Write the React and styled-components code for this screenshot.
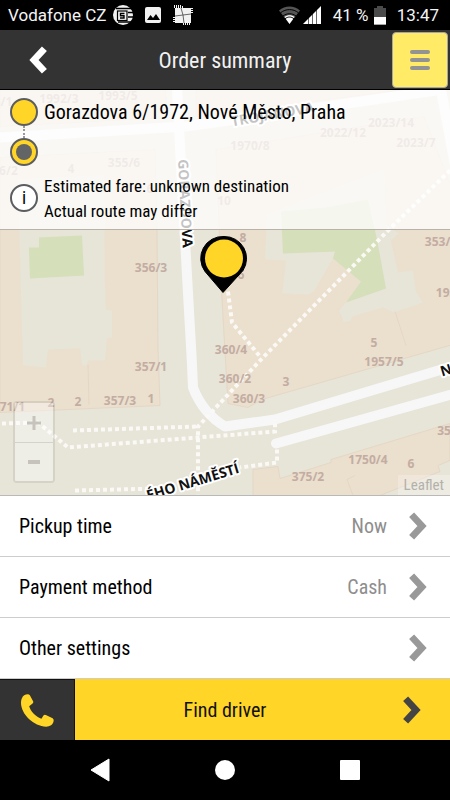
import React from "react"
import styled, { createGlobalStyle } from "styled-components"

const GlobalStyle = createGlobalStyle`
  * { box-sizing: border-box; }
  body {
    margin: 0;
    background: #000;
    font-family: "Roboto Condensed", "Liberation Sans Narrow", Roboto, sans-serif;
  }
  button {
    font-family: inherit;
    border: 0;
    margin: 0;
    padding: 0;
    cursor: pointer;
  }
`

const Screen = styled.div`
  display: flex;
  flex-direction: column;
  min-height: 100vh;
`

const StatusBar = styled.div`
  display: flex;
  align-items: center;
  justify-content: space-between;
  height: 30px;
  padding: 0 11px 0 8px;
  background: #000;
  color: #f4f4f4;
  font-family: Roboto, sans-serif;
  font-size: 17px;
  line-height: 30px;
  white-space: nowrap;
`

const StatusGroup = styled.div`
  display: flex;
  align-items: center;
  gap: ${p => p.$gap}px;
  font-weight: ${p => p.$weight || 400};
`

const Header = styled.header`
  display: grid;
  grid-template-columns: 76px 1fr 56px;
  align-items: center;
  height: 60px;
  padding-right: 2px;
  background: #333;
  border-bottom: 1px solid #000;
`

const Title = styled.h1`
  margin: 0;
  padding: 2px 18px 0 0;
  color: #f2f2f2;
  font-size: 22px;
  font-weight: 400;
  line-height: 28px;
  text-align: center;
`

const BackButton = styled.button`
  display: flex;
  align-items: center;
  justify-content: center;
  height: 56px;
  background: transparent;
  color: #fff;
`

const MenuButton = styled.button`
  display: flex;
  flex-direction: column;
  align-items: center;
  justify-content: center;
  gap: 4px;
  height: 56px;
  background: #ffeb66;
  border: 1px solid #a6a6a6;
  border-radius: 4px;
`

const MenuLine = styled.span`
  width: 20px;
  height: 4px;
  border-radius: 2px;
  background: #939393;
`

const MapArea = styled.main`
  position: relative;
  flex: 1 0 406px;
  overflow: hidden;
  background: #e7e4d8;
  border-bottom: 1px solid #b9b9b9;
`

const MapDrawing = styled.svg`
  position: absolute;
  inset: 0;
  width: 100%;
  height: 100%;
`

const RoutePanel = styled.section`
  position: relative;
  display: grid;
  grid-template-columns: 28px 1fr;
  column-gap: 6px;
  height: 140px;
  padding: 8px 10px 5px;
  background: rgba(255, 255, 255, 0.75);
  border-bottom: 1px solid #b8b2a8;
  color: #000;
`

const Stops = styled.div`
  display: flex;
  flex-direction: column;
  align-items: center;
`

const Stop = styled.span`
  display: flex;
  align-items: center;
  justify-content: center;
  width: 28px;
  height: 28px;
  flex: none;
  border: 2px solid #5b5d60;
  border-radius: 50%;
  background: ${p => p.$fill};
  font-size: 18px;
  line-height: 24px;
`

const StopCore = styled.span`
  width: 16px;
  height: 16px;
  border-radius: 50%;
  background: #636466;
`

const Dots = styled.span`
  height: 12px;
  border-left: 2px dotted #999;
`

const RouteText = styled.div`
  display: flex;
  flex-direction: column;
  justify-content: space-between;
`

const Address = styled.p`
  margin: 0;
  font-size: 20px;
  line-height: 28px;
`

const Fare = styled.p`
  margin: 0;
  font-size: 17px;
  line-height: 25px;
`

const InfoStop = styled(Stop)`
  margin-top: 18px;
`

const ZoomControl = styled.div`
  position: absolute;
  left: 13px;
  bottom: 12px;
  display: flex;
  flex-direction: column;
  border: 2px solid rgba(90, 90, 80, 0.13);
  border-radius: 4px;
`

const ZoomButton = styled.button`
  display: flex;
  align-items: center;
  justify-content: center;
  width: 38px;
  height: 39px;
  background: rgba(255, 255, 255, 0.36);
  color: #c6c3bc;

  & + & {
    border-top: 1px solid #d5d2c9;
  }
`

const Attribution = styled.a`
  position: absolute;
  right: 0;
  bottom: 0;
  padding: 0 6px;
  background: rgba(255, 255, 255, 0.25);
  color: #b3b1aa;
  font-size: 15px;
  line-height: 20px;
  text-decoration: none;
`

const Options = styled.div`
  display: flex;
  flex-direction: column;
  background: #fff;
`

const OptionRow = styled.button`
  display: flex;
  align-items: center;
  height: 61px;
  padding: 0 23px 0 19px;
  background: #fff;
  border-bottom: 1px solid #cdcdcd;
  color: #000;
  font-size: 20px;
  line-height: 24px;
  text-align: left;
`

const OptionValue = styled.span`
  margin-left: auto;
  margin-right: 22px;
  color: #8e8e8e;
`

const Actions = styled.footer`
  display: grid;
  grid-template-columns: 75px 1fr;
  height: 61px;
`

const CallButton = styled.button`
  display: flex;
  align-items: center;
  justify-content: center;
  background: #333;
  border-right: 1px solid #111;
  border-top: 1px solid #111;
`

const FindButton = styled.button`
  display: grid;
  grid-template-columns: 1fr 18px;
  align-items: center;
  padding: 0 29px 0 0;
  background: #ffd527;
  color: #111;
  font-size: 20px;
  line-height: 24px;
`

const FindLabel = styled.span`
  padding-right: 28px;
`

const SystemNav = styled.nav`
  display: flex;
  justify-content: center;
  gap: 65px;
  height: 60px;
  background: #000;
`

const SystemButton = styled.button`
  display: flex;
  align-items: center;
  justify-content: center;
  width: 60px;
  background: transparent;
`

const Chevron = ({ color, left }) => (
  <svg width="18" height="28" viewBox="0 0 18 28" aria-hidden="true">
    <path
      d={left ? "M15.4 2.8 L5 14 L15.4 25.2" : "M2.6 2.8 L13 14 L2.6 25.2"}
      fill="none"
      stroke={color}
      strokeWidth="6.8"
    />
  </svg>
)

const StatusIcons = () => (
  <svg width="82" height="22" viewBox="113 4 82 22" aria-hidden="true">
    <circle cx="124" cy="15" r="10" fill="#f2f2f2" />
    <path d="M117 8.500H134M129 12.500H136M129 17H136M119 22H132" stroke="#000" strokeWidth="1.4" />
    <rect x="118.500" y="11" width="9.500" height="9.500" fill="#f2f2f2" stroke="#000" strokeWidth="1.2" />
    <path d="M125.500 13.500H121.500V15.700H125V18H121" fill="none" stroke="#000" strokeWidth="1.4" />
    <rect x="146" y="7" width="16" height="16" rx="2" fill="#f2f2f2" />
    <path d="M148 20l3.500-5 2.500 3 3-4 4 6z" fill="#000" />
    <rect x="176" y="8" width="16" height="15" fill="#f2f2f2" />
    <path d="M175.500 5V8M177.500 5V8M179.500 5V8M181.500 5V8M183.500 6V8M184.500 23V25M186.500 23V25M188.500 23V25M190.500 23V25" stroke="#f2f2f2" />
    <path d="M174 17.500H176M174 19.500H176M174 21.500H176M192 8.500H194M192 10.500H194M192 12.500H194" stroke="#f2f2f2" />
    <path d="M182 8l2 7 1 8M176 16l8-1 8-1" fill="none" stroke="#444" strokeWidth="0.8" />
  </svg>
)

const Wifi = () => (
  <svg width="21" height="18" viewBox="0 0 21 18" aria-hidden="true">
    <path d="M0 4.500C6-1 15-1 21 4.500L10.500 18z" fill="#555" />
    <path d="M5.500 11C8 8.500 13 8.500 15.500 11L10.500 18z" fill="#fff" />
    <path d="M1.500 6.800C7 2.500 14 2.500 19.500 6.800M4 10C8 7 13 7 17 10M6 12.700C9 10.500 12 10.500 15 12.700" fill="none" stroke="#000" strokeWidth="1" />
  </svg>
)

const Signal = () => (
  <svg width="18" height="18" viewBox="0 0 18 18" aria-hidden="true">
    <path d="M0 18L18 0v18z" fill="#fff" />
    <path d="M5.500 18V11M9.500 18V7M13.500 18V3" stroke="#000" strokeWidth="0.6" />
  </svg>
)

const Battery = () => (
  <svg width="12" height="19" viewBox="0 0 12 19" aria-hidden="true">
    <path d="M3 0h6v2h3v17H0V2h3z" fill="#4a4a4a" />
    <path d="M0 11h12v7.500H0z" fill="#fff" />
  </svg>
)

const Phone = () => (
  <svg width="33" height="33" viewBox="0 0 97 97" aria-hidden="true">
    <path
      d="M2 14C6 4 12 1 20 1Q24 1 26 4L36 22Q37 25 34 28L24 36C28 50 42 66 60 73L66 63Q69 60 73 62L93 71Q97 74 96 79C94 90 85 95 74 96C38 96 0 60 0 26Q0 18 2 14Z"
      fill="#ffd527"
    />
  </svg>
)

const houseNumbers = [
  ["1992/3", 59, 103], ["1993/5", 118, 100], ["3/1", 3, 106], ["96/2", 5, 175],
  ["4", 71, 173], ["355/6", 124, 167], ["1970/8", 250, 150], ["2022/12", 343, 137],
  ["2023/14", 391, 127], ["2023/7", 416, 147], ["6", 150, 193], ["10", 224, 205],
  ["8", 243, 242], ["6", 241, 279], ["353/3", 441, 246], ["1957/", 452, 297],
  ["356/3", 151, 272], ["357/1", 151, 371], ["360/4", 231, 354], ["360/2", 235, 383],
  ["360/3", 249, 403], ["3", 286, 386], ["5", 374, 347], ["1957/5", 384, 366],
  ["371/1", 9, 411], ["2", 51, 407], ["2", 78, 406], ["357/3", 120, 405],
  ["1", 151, 403], ["1750/4", 368, 464], ["6", 411, 468], ["375/2", 308, 481],
  ["354/", 450, 435],
]

const Map = () => (
  <MapDrawing viewBox="0 90 450 406" preserveAspectRatio="xMidYMid slice" aria-label="Map">
    <rect y="90" width="450" height="406" fill="#e7e4d8" />

    {/* buildings */}
    <g fill="#ebdfce" stroke="#e2d3c0" strokeWidth="0.7">
      <path d="M0 90H165L168 118L0 127Z" />
      <path d="M0 158L155 150L157 230L158 350L160 406L0 413Z" />
      <path d="M196 90H405L196 117Z" />
      <path d="M216 150L424 117L460 210V343L262 400L248 408L228 404L222 300Z" />
      <path d="M253 470L278 467L280 479L331 463V460L450 424V461L438 466L440 472L380 496H253Z" />
    </g>

    {/* courtyards */}
    <path d="M18 180L104 176L105 285L106 310L112 311L112 338L107 339L105 361H88L87 366L82 366L80 349L48 350L46 368L23 366L21 300Z" fill="#e7e4d8" />
    <path d="M267 215L370 175L384 170L386 225L399 234L391 241L398 273L413 271L416 292L423 303L394 313L383 308L352 317L351 321L344 323L339 311L346 303L361 282L333 259L314 292L308 295L282 294L286 261L265 260Z" fill="#e7e4d8" />
    <path d="M89 405L88 365M353 496L347 480L355 476M395 312L406 346" fill="none" stroke="#e2d3c0" strokeWidth="0.7" />

    {/* lawns */}
    <path d="M39 238L82 236L84 276L30 279L29 248L39 248Z" fill="#d5dfba" />
    <path d="M281 212L325 208L368 200L377 240L386 289L346 303L361 282L333 259L335 252L283 254Z" fill="#d5dfba" />

    {/* streets */}
    <g fill="none" stroke="#f7f7f7" strokeWidth="10" strokeLinejoin="round">
      <path d="M0 138L185 127L300 111L442 90" />
      <path d="M177 90L185 240L192 365L193 388Q203 414 225 427L275 420L455 366" />
      <path d="M440 85L455 165" />
      <path d="M276 444L455 394" strokeLinecap="round" />
    </g>

    {/* footpaths */}
    <g fill="none" stroke="#faf9f5" strokeWidth="4" strokeDasharray="4 3">
      <path d="M450 171L388 231L262 359L198 427V495" />
      <path d="M228 292L232 323L260 357" />
      <path d="M2 424L38 423L68 448L275 432V420" />
      <path d="M73 431L198 427" />
      <path d="M277 450V463L240 468" />
      <path d="M75 491L160 489" />
    </g>

    <g fill="#c3ada2" fontFamily='"Open Sans", "Noto Sans", sans-serif' fontSize="12" fontWeight="700" textAnchor="middle">
      {houseNumbers.map(([label, x, y]) => (
        <text key={label + x} x={x} y={y}>{label}</text>
      ))}
    </g>

    <g fill="#111" stroke="#fff" strokeWidth="4" strokeLinejoin="round" paintOrder="stroke" fontFamily='"Open Sans", "Noto Sans", sans-serif' fontSize="14" fontWeight="700">
      <text transform="translate(178 160) rotate(87)">GORAZDOVA</text>
      <text transform="translate(232 127) rotate(-10)">TROJANOVA</text>
      <text transform="translate(240 473) rotate(-17)" textAnchor="end">ÉHO NÁMĚSTÍ</text>
      <text transform="translate(442 377) rotate(-17)">NA</text>
    </g>

    {/* pickup pin */}
    <path d="M224 237A22 22 0 0 1 243 271L223 293L205 272A22 22 0 0 1 224 237Z" fill="#000" stroke="#000" />
    <circle cx="224" cy="259" r="19" fill="#ffd527" />
  </MapDrawing>
)

const options = [
  { label: "Pickup time", value: "Now" },
  { label: "Payment method", value: "Cash" },
  { label: "Other settings" },
]

const App = () => {
  return (
    <>
      <GlobalStyle />
      <Screen>
        <StatusBar>
          <StatusGroup $gap={6}>
            <span>Vodafone CZ</span>
            <StatusIcons />
          </StatusGroup>
          <StatusGroup $gap={3} $weight={500}>
            <Wifi />
            <Signal />
            <StatusGroup $gap={6}>
              <span>&nbsp;&nbsp;41 %</span>
              <Battery />
              <span>&nbsp;13:47</span>
            </StatusGroup>
          </StatusGroup>
        </StatusBar>

        <Header>
          <BackButton aria-label="Back"><Chevron color="#fff" left /></BackButton>
          <Title>Order summary</Title>
          <MenuButton aria-label="Menu">
            <MenuLine />
            <MenuLine />
            <MenuLine />
          </MenuButton>
        </Header>

        <MapArea>
          <Map />
          <RoutePanel>
            <Stops>
              <Stop $fill="#ffd527" />
              <Dots />
              <Stop $fill="#ffd527"><StopCore /></Stop>
              <InfoStop $fill="#fff">i</InfoStop>
            </Stops>
            <RouteText>
              <Address>Gorazdova 6/1972, Nové Město, Praha</Address>
              <Fare>
                Estimated fare: unknown destination
                <br />
                Actual route may differ
              </Fare>
            </RouteText>
          </RoutePanel>
          <ZoomControl>
            <ZoomButton aria-label="Zoom in">
              <svg width="14" height="14"><path d="M0 7H14M7 0V14" stroke="currentColor" strokeWidth="3" /></svg>
            </ZoomButton>
            <ZoomButton aria-label="Zoom out">
              <svg width="12" height="4"><path d="M0 2H12" stroke="currentColor" strokeWidth="4" /></svg>
            </ZoomButton>
          </ZoomControl>
          <Attribution href="#leaflet">Leaflet</Attribution>
        </MapArea>

        <Options>
          {options.map(({ label, value }) => (
            <OptionRow key={label}>
              <span>{label}</span>
              <OptionValue>{value}</OptionValue>
              <Chevron color="#999" />
            </OptionRow>
          ))}
        </Options>

        <Actions>
          <CallButton aria-label="Call"><Phone /></CallButton>
          <FindButton>
            <FindLabel>Find driver</FindLabel>
            <Chevron color="#444" />
          </FindButton>
        </Actions>

        <SystemNav>
          <SystemButton aria-label="System back">
            <svg width="20" height="24"><path d="M19 1V23L1 12Z" fill="#fff" stroke="#fff" strokeLinejoin="round" /></svg>
          </SystemButton>
          <SystemButton aria-label="Home">
            <svg width="20" height="20"><circle cx="10" cy="10" r="10" fill="#fff" /></svg>
          </SystemButton>
          <SystemButton aria-label="Recent apps">
            <svg width="20" height="20"><rect width="20" height="20" rx="1" fill="#fff" /></svg>
          </SystemButton>
        </SystemNav>
      </Screen>
    </>
  )
}

export default App
